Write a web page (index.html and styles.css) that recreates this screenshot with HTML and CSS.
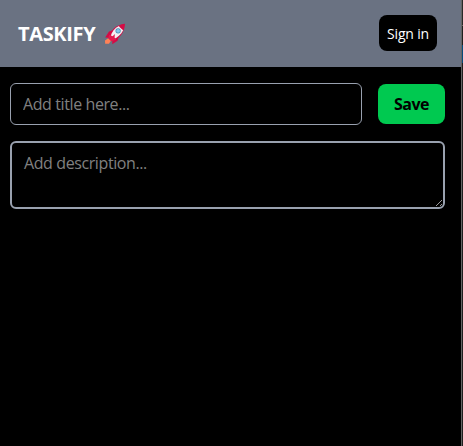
FILE: index.html
```html
<!DOCTYPE html>
<html lang="en">
<head>
<meta charset="utf-8">
<title>Taskify</title>
<link rel="stylesheet" href="styles.css">
</head>
<body>
<div class="app">
  <header class="navbar">
    <h1 class="brand"><span class="brand-name">TASKIFY</span>
      <svg class="rocket" viewBox="0 0 22 22" aria-hidden="true">
        <path fill="#ff8257" d="M4.5 15 1 17.4 1.2 20.8H5L7.2 17.3z"/>
        <path fill="#d50b45" d="M9.5 7 5 8.6 1.2 14.6 7 15zM15 12.5l-1.4 5.2-5.4 3.5.2-5.2z"/>
        <path fill="#d50b45" d="M4.3 15.2C6 8.2 11.3 1.7 21 .8 20.7 10 14.8 16.2 7.5 18.2z"/>
        <path fill="#f3eff2" d="M6.3 14.2C7.7 9 10.7 5 14.9 3.1c1 1.6 2.7 3.3 4.3 4.1-2 4.3-5.7 7.5-10.6 9.3z"/>
        <path fill="#e51a4e" d="m5.2 11.8 3.5 1.5 2.2-2.2-.3 3.3 1.5 2.3-4.7 1.5L4.3 15z"/>
        <circle cx="14.1" cy="7.8" r="2.6" fill="#4b8cae"/>
        <circle cx="14.1" cy="7.8" r="1.9" fill="#83c6eb"/>
      </svg>
    </h1>
    <button class="sign-in"><span>Sign in</span></button>
  </header>
  <main class="editor">
    <div class="title-row">
      <input class="field title-input" type="text" placeholder="Add title here...">
      <button class="save"><span>Save</span></button>
    </div>
    <textarea class="field description" placeholder="Add description..."></textarea>
  </main>
</div>
<div class="edge"></div>
</body>
</html>
```
FILE: styles.css
```css
* { box-sizing: border-box; }
body {
  margin: 0;
  height: 100vh;
  display: flex;
  overflow: hidden;
  background: #000;
  font-family: "Open Sans", "Noto Sans", sans-serif;
}
button, input, textarea { font-family: inherit; margin: 0; }
.app { flex: 1; min-width: 0; }
.navbar {
  height: 67px;
  padding: 0 24px 0 18px;
  display: flex;
  align-items: center;
  justify-content: space-between;
  background: #6a7282;
}
.brand {
  margin: 0;
  display: flex;
  align-items: center;
  gap: 8px;
  color: #fff;
  font-size: 20px;
  line-height: 28px;
  font-weight: 700;
}
.brand-name { width: 78px; letter-spacing: -0.35px; white-space: nowrap; }
.rocket { width: 22px; height: 22px; }
.sign-in {
  width: 58px;
  height: 36px;
  margin-bottom: 1px;
  padding: 0;
  border: 0;
  border-radius: 8px;
  background: #000;
  color: #fff;
  font-size: 14px;
  letter-spacing: -0.2px;
}
.editor {
  padding: 16px 16px 0 10px;
  display: flex;
  flex-direction: column;
  gap: 16px;
}
.title-row { display: flex; align-items: center; gap: 16px; }
.field {
  display: block;
  background: #000;
  color: #fff;
  border: 1px solid #99a1af;
  font-size: 16px;
  line-height: 24px;
  letter-spacing: -0.4px;
  outline: 0;
}
.field::placeholder { color: #808080; opacity: 1; }
.title-input {
  flex: 1;
  min-width: 0;
  height: 42px;
  padding: 8px 12px;
  border-radius: 6px;
}
.save {
  width: 67px;
  height: 40px;
  padding: 0;
  border: 0;
  border-radius: 8px;
  background: #00c950;
  color: #000;
  font-size: 16px;
  font-weight: 700;
  letter-spacing: -0.5px;
}
.description {
  width: 100%;
  height: 68px;
  padding: 8px 12px;
  border-width: 2px;
  border-radius: 6px;
  resize: vertical;
}
.edge {
  width: 2px;
  border-left: 1px solid #656565;
  background: linear-gradient(#292929 0 25px, #656565 25px 26px, #1f1f1f 26px 45px, #064a7a 45px 63px, #1f1f1f 63px);
}
```
